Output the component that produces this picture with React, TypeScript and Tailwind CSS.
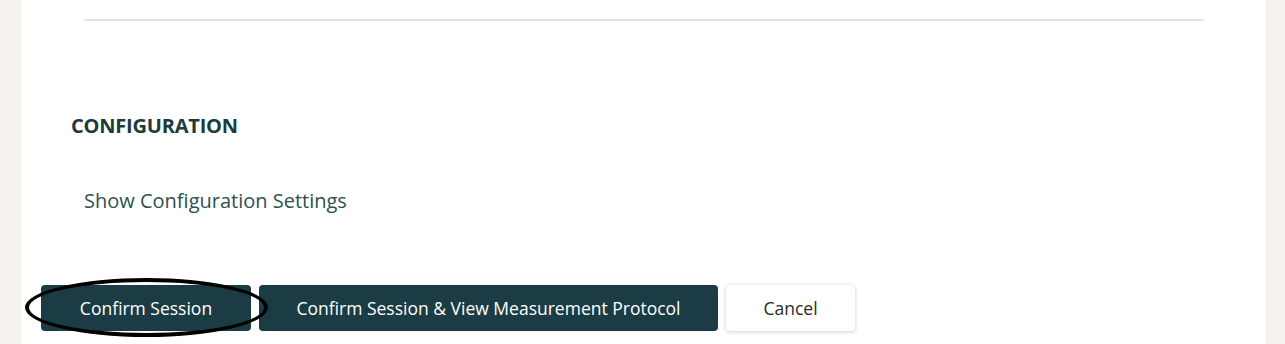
export default function App() {
  return (
    <div
      className="min-h-[344px] w-full bg-[#f6f3ef]"
      style={{ fontFamily: '"Open Sans", "Noto Sans", sans-serif' }}
    >
      <div className="ml-[21px] h-[344px] w-[1245px] overflow-hidden bg-white">
        <div className="pl-[63px] pt-[19px]">
          <div className="h-[2px] w-[1120px] bg-[#e3e3e3]" />
        </div>

        <h2 className="ml-[50px] mt-[91px] text-[20px] font-bold uppercase leading-[28px] tracking-[-0.2px] text-[#1c3b3b]">
          Configuration
        </h2>

        <p className="ml-[63px] mt-[47px] text-[20px] leading-[28px] text-[#2c5250]">
          Show Configuration Settings
        </p>

        <div className="ml-[20px] mt-[70px] flex items-center gap-2">
          <div className="relative">
            <button className="h-[46px] w-[210px] rounded-[4px] bg-[#1b3c44] text-[17.5px] text-white">
              Confirm Session
            </button>
            <div className="pointer-events-none absolute left-[-16px] top-[-7px] h-[59px] w-[243px] rounded-[50%] border-[4px] border-black" />
          </div>
          <button className="h-[46px] w-[459px] rounded-[4px] bg-[#1b3c44] text-[17.5px] text-white">
            Confirm Session &amp; View Measurement Protocol
          </button>
          <button className="h-[46px] w-[129px] rounded-[4px] bg-white text-[17.5px] text-[#2a2a2a] shadow-[0_1px_4px_rgba(0,0,0,0.2)]">
            Cancel
          </button>
        </div>
      </div>
    </div>
  );
}
